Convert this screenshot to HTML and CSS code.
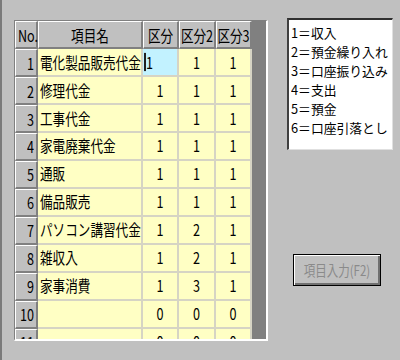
FILE: index.html
```html
<!DOCTYPE html>
<html lang="ja">
<head>
<meta charset="utf-8">
<link rel="stylesheet" href="styles.css">
</head>
<body>
<div class="window">
  <div class="gridframe">
    <div class="grid">
      <div class="hc no"><span class="t">No.</span></div>
      <div class="hc"><span class="t">項目名</span></div>
      <div class="hc"><span class="t">区分</span></div>
      <div class="hc"><span class="t">区分2</span></div>
      <div class="hc"><span class="t">区分3</span></div>

      <div class="rh"><span class="t">1</span></div>
      <div class="dc name"><span class="t">電化製品販売代金</span></div>
      <div class="dc num sel"><span class="t caret">1</span></div>
      <div class="dc num"><span class="t">1</span></div>
      <div class="dc num"><span class="t">1</span></div>

      <div class="rh"><span class="t">2</span></div>
      <div class="dc name"><span class="t">修理代金</span></div>
      <div class="dc num"><span class="t">1</span></div>
      <div class="dc num"><span class="t">1</span></div>
      <div class="dc num"><span class="t">1</span></div>

      <div class="rh"><span class="t">3</span></div>
      <div class="dc name"><span class="t">工事代金</span></div>
      <div class="dc num"><span class="t">1</span></div>
      <div class="dc num"><span class="t">1</span></div>
      <div class="dc num"><span class="t">1</span></div>

      <div class="rh"><span class="t">4</span></div>
      <div class="dc name"><span class="t">家電廃棄代金</span></div>
      <div class="dc num"><span class="t">1</span></div>
      <div class="dc num"><span class="t">1</span></div>
      <div class="dc num"><span class="t">1</span></div>

      <div class="rh"><span class="t">5</span></div>
      <div class="dc name"><span class="t">通販</span></div>
      <div class="dc num"><span class="t">1</span></div>
      <div class="dc num"><span class="t">1</span></div>
      <div class="dc num"><span class="t">1</span></div>

      <div class="rh"><span class="t">6</span></div>
      <div class="dc name"><span class="t">備品販売</span></div>
      <div class="dc num"><span class="t">1</span></div>
      <div class="dc num"><span class="t">1</span></div>
      <div class="dc num"><span class="t">1</span></div>

      <div class="rh"><span class="t">7</span></div>
      <div class="dc name"><span class="t">パソコン講習代金</span></div>
      <div class="dc num"><span class="t">1</span></div>
      <div class="dc num"><span class="t">2</span></div>
      <div class="dc num"><span class="t">1</span></div>

      <div class="rh"><span class="t">8</span></div>
      <div class="dc name"><span class="t">雑収入</span></div>
      <div class="dc num"><span class="t">1</span></div>
      <div class="dc num"><span class="t">2</span></div>
      <div class="dc num"><span class="t">1</span></div>

      <div class="rh"><span class="t">9</span></div>
      <div class="dc name"><span class="t">家事消費</span></div>
      <div class="dc num"><span class="t">1</span></div>
      <div class="dc num"><span class="t">3</span></div>
      <div class="dc num"><span class="t">1</span></div>

      <div class="rh"><span class="t">10</span></div>
      <div class="dc name"></div>
      <div class="dc num"><span class="t">0</span></div>
      <div class="dc num"><span class="t">0</span></div>
      <div class="dc num"><span class="t">0</span></div>

      <div class="rh"><span class="t">11</span></div>
      <div class="dc name"></div>
      <div class="dc num"><span class="t">0</span></div>
      <div class="dc num"><span class="t">0</span></div>
      <div class="dc num"><span class="t">0</span></div>
    </div>
    <div class="vscroll"></div>
  </div>
  <div class="side">
    <div class="legend">
      <div class="line"><span class="t">1＝収入</span></div>
      <div class="line"><span class="t">2＝預金繰り入れ</span></div>
      <div class="line"><span class="t">3＝口座振り込み</span></div>
      <div class="line"><span class="t">4＝支出</span></div>
      <div class="line"><span class="t">5＝預金</span></div>
      <div class="line"><span class="t">6＝口座引落とし</span></div>
    </div>
    <button class="btn" disabled><span class="t">項目入力(F2)</span></button>
  </div>
</div>
</body>
</html>
```

FILE: styles.css
```css
* { box-sizing: border-box; }
html, body {
  margin: 0;
  padding: 0;
  width: 400px;
  height: 360px;
  overflow: hidden;
  background: #c0c0c0;
}
body {
  font-family: "Noto Sans CJK JP", "Noto Sans", sans-serif;
  color: #000;
}
.window {
  display: flex;
  align-items: flex-start;
  height: 360px;
  padding: 18px 0 0 12px;
  border-left: 2px solid #7a7a7a;
}
.t {
  display: inline-block;
  font-size: 12.6px;
  line-height: 14px;
  transform: scaleY(1.3);
  white-space: nowrap;
}
.gridframe {
  margin-top: 2px;
  display: flex;
  width: 254px;
  height: 321px;
  border-top: 1px solid #808080;
  border-left: 1px solid #808080;
  border-right: 2px solid #ffffff;
  border-bottom: 2px solid #ffffff;
  overflow: hidden;
}
.grid {
  display: grid;
  grid-template-columns: 23px 105px 36px 37px 36px;
  grid-auto-rows: 28px;
  width: 237px;
  height: 318px;
  overflow: hidden;
  background: #ffffc4;
}
.vscroll {
  width: 14px;
  height: 318px;
  background: #808080;
}
.hc, .rh {
  background: #c0c0c0;
  border-top: 1px solid #ffffff;
  border-left: 1px solid #ffffff;
  border-right: 2px solid #808080;
  border-bottom: 2px solid #808080;
  display: flex;
  align-items: center;
  justify-content: center;
}
.hc.no { justify-content: flex-start; padding-left: 2px; }
.rh { justify-content: flex-end; padding-right: 2px; }
.dc {
  background: #ffffc4;
  border-right: 2px solid #d6d4c4;
  border-bottom: 2px solid #d6d4c4;
  display: flex;
  align-items: center;
  justify-content: center;
}
.dc.name { justify-content: flex-start; padding-left: 2px; }
.dc.sel {
  background: #c2f2ff;
  justify-content: flex-start;
  padding-left: 1px;
}
.caret { border-left: 2px solid #202020; padding-left: 0; }
.side {
  margin-left: 19px;
  display: flex;
  flex-direction: column;
}
.legend {
  width: 106px;
  height: 132px;
  background: #ffffff;
  border-top: 2px solid #303030;
  border-left: 2px solid #404040;
  border-right: 1px solid #e0e0e0;
  border-bottom: 1px solid #e0e0e0;
  padding: 3px 0 0 2px;
}
.legend .line {
  height: 19px;
  display: flex;
  align-items: center;
  overflow: hidden;
}
.legend .t { font-size: 12.8px; line-height: 15px; transform: none; }
.btn {
  margin: 104px 0 0 6px;
  width: 88px;
  height: 32px;
  padding: 0;
  background: #c0c0c0;
  border: 1px solid #000;
  box-shadow: inset 1px 1px 0 #ffffff, inset -2px -2px 0 #707070;
  color: #8a8a8a;
  font-family: "Noto Sans CJK JP", sans-serif;
  display: flex;
  align-items: center;
  justify-content: center;
}
.btn .t { font-size: 11.5px; transform: scaleY(1.25); }
```
